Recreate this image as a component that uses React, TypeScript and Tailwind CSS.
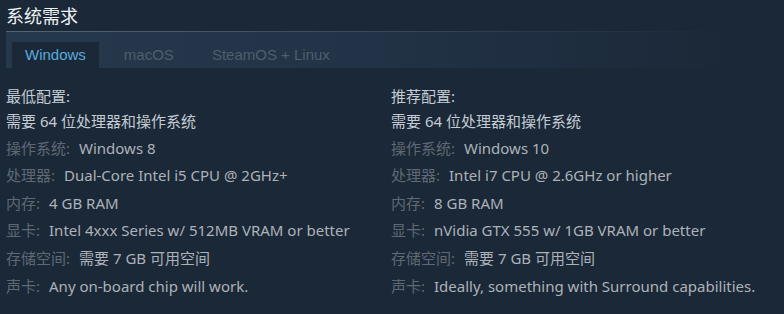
const minimum = {
    title: "最低配置:",
    note: "需要 64 位处理器和操作系统",
    rows: [
        { label: "操作系统:", value: "Windows 8" },
        { label: "处理器:", value: "Dual-Core Intel i5 CPU @ 2GHz+" },
        { label: "内存:", value: "4 GB RAM" },
        { label: "显卡:", value: "Intel 4xxx Series w/ 512MB VRAM or better" },
        { label: "存储空间:", value: "需要 7 GB 可用空间" },
        { label: "声卡:", value: "Any on-board chip will work." },
    ],
};

const recommended = {
    title: "推荐配置:",
    note: "需要 64 位处理器和操作系统",
    rows: [
        { label: "操作系统:", value: "Windows 10" },
        { label: "处理器:", value: "Intel i7 CPU @ 2.6GHz or higher" },
        { label: "内存:", value: "8 GB RAM" },
        { label: "显卡:", value: "nVidia GTX 555 w/ 1GB VRAM or better" },
        { label: "存储空间:", value: "需要 7 GB 可用空间" },
        { label: "声卡:", value: "Ideally, something with Surround capabilities." },
    ],
};

const font = "font-['Noto_Sans','Noto_Sans_CJK_SC',sans-serif]";

export default function App() {
    return (
        <div className={`w-[784px] h-[314px] bg-[#1b2838] overflow-hidden ${font}`}>
            {/* HEADER */}
            <div className="px-[6px] pt-[4px]">
                <h2 className="text-[18px] leading-[24px] text-[#eef2f5]">系统需求</h2>
                <div className="mt-[3px] h-px w-[716px] bg-linear-to-r from-[#56636f] via-[#3a4a5a] to-transparent" />

                {/* TABS */}
                <div className="w-[729px] h-[36px] flex items-end gap-[12px] pl-[6px] bg-linear-to-r from-[#26384b] via-[#223347] to-[#1b2838] font-['Liberation_Sans',Arial,sans-serif] text-[15px]">
                    <div className="h-[26px] px-[13px] flex items-center bg-[#1b2838] text-[#5aaadd]">
                        Windows
                    </div>
                    <div className="h-[26px] px-[13px] flex items-center text-[#4f5e6d]">macOS</div>
                    <div className="h-[26px] px-[13px] flex items-center text-[#4f5e6d]">SteamOS + Linux</div>
                </div>
            </div>

            {/* REQUIREMENTS */}
            <div className="grid grid-cols-[385px_385px] pl-[6px] mt-[16px] text-[15px]">
                <ReqColumn data={minimum} />
                <ReqColumn data={recommended} />
            </div>
        </div>
    );
}

function ReqColumn({
    data,
}: {
    data: { title: string; note: string; rows: { label: string; value: string }[] };
}) {
    return (
        <div>
            <div className="leading-[25px] text-[#c3ccd3]">{data.title}</div>
            <div className="leading-[25px] text-[#c3ccd3]">{data.note}</div>
            <ul>
                {data.rows.map((r) => (
                    <li key={r.label} className="h-[27.6px] flex items-center whitespace-nowrap">
                        <span className="text-[#5f6973]">{r.label}</span>
                        <span className="ml-[9px] text-[#acb2b8]">{r.value}</span>
                    </li>
                ))}
            </ul>
        </div>
    );
}
